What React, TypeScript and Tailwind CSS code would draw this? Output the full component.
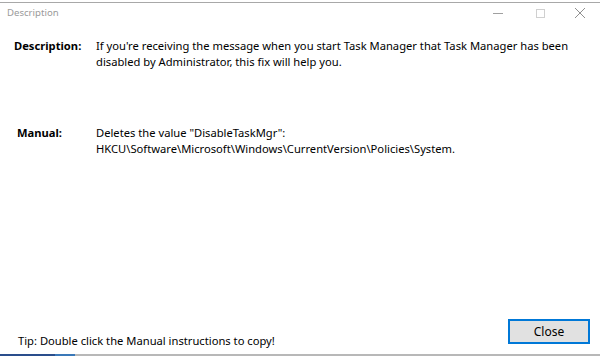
import React from "react";

const font = { fontFamily: '"Noto Sans", "Open Sans", sans-serif' };

const App = () => {
	return (
		<div
			className="w-[600px] h-[356px] bg-white flex flex-col overflow-hidden text-[11.2px] leading-[16px] text-black"
			style={font}
		>
			<div className="h-[3px] flex items-end bg-white">
				<div className="w-full h-[1px] bg-[#a8a8a8]" />
			</div>
			<div className="h-[20px] flex items-center pl-[7px]">
				<span className="text-[#9a9a9a] text-[9.6px]">Description</span>
				<div className="ml-auto flex items-center h-full">
					<div className="w-[44px] flex justify-center">
						<div className="w-[10px] h-[1px] bg-[#a0a0a0]" />
					</div>
					<div className="w-[40px] flex justify-center">
						<div className="w-[9px] h-[9px] border border-[#d0d0d0]" />
					</div>
					<div className="w-[40px] flex justify-center">
						<svg width="12" height="12" viewBox="0 0 12 12">
							<path d="M1 1 L11 11 M11 1 L1 11" stroke="#909090" strokeWidth="1" />
						</svg>
					</div>
				</div>
			</div>
			<div className="flex mt-[15px]">
				<div className="w-[96px] pl-[14px] font-bold">Description:</div>
				<div className="w-[500px]">
					If you're receiving the message when you start Task Manager that Task Manager has been
					<br />
					disabled by Administrator, this fix will help you.
				</div>
			</div>
			<div className="flex mt-[55px]">
				<div className="w-[96px] pl-[17px] font-bold">Manual:</div>
				<div className="w-[500px]">
					Deletes the value "DisableTaskMgr":
					<br />
					HKCU\Software\Microsoft\Windows\CurrentVersion\Policies\System.
				</div>
			</div>
			<div className="flex-1" />
			<div className="flex items-end pl-[18px] pr-[10px] mb-[5px]">
				<span>Tip: Double click the Manual instructions to copy!</span>
				<button className="ml-auto mb-[5px] w-[82px] h-[25px] bg-[#e1e1e1] border-2 border-[#0078d7] text-[12px]">
					Close
				</button>
			</div>
			<div className="h-[2px] flex">
				<div className="w-[55px] bg-[#2a4e8c]" />
				<div className="w-[20px] bg-[#3a78b8]" />
				<div className="flex-1 bg-[#b8b8b8]" />
			</div>
		</div>
	);
};

export default App;
